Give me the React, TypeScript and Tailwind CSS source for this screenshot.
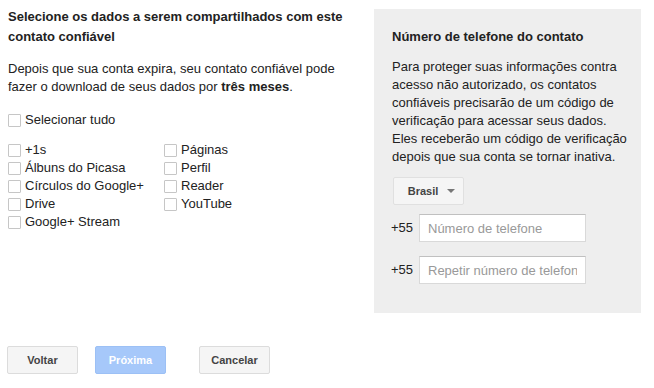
import React from 'react';

const leftItems = ['+1s', 'Álbuns do Picasa', 'Círculos do Google+', 'Drive', 'Google+ Stream'];
const rightItems = ['Páginas', 'Perfil', 'Reader', 'YouTube'];

const Check: React.FC<{ label: string }> = ({ label }) => (
    <label className="flex items-center h-[18px] cursor-pointer">
        <span className="w-[13px] h-[13px] border border-[#c6c6c6] bg-white rounded-[1px] shrink-0" />
        <span className="ml-[4px]">{label}</span>
    </label>
);

const PhoneRow: React.FC<{ placeholder: string }> = ({ placeholder }) => (
    <div className="flex items-center">
        <span className="w-[28px] -ml-[1px] text-[#222]">+55</span>
        <input
            type="text"
            placeholder={placeholder}
            className="w-[167px] h-[28px] px-[8px] bg-white border border-[#d9d9d9] border-t-[#c0c0c0] text-[13px] placeholder:text-[#999] outline-none"
        />
    </div>
);

export default function App() {
    return (
        <div className="w-[654px] h-[388px] bg-white text-[13px] text-[#222] font-['Liberation_Sans',Arial,sans-serif] overflow-hidden">
            <div className="flex">
                {/* Left column */}
                <div className="w-[366px] pl-[8px] pt-[7px]">
                    <h2 className="font-bold leading-[20px] w-[340px]">
                        Selecione os dados a serem compartilhados com este contato confiável
                    </h2>
                    <p className="mt-[13px] leading-[18px] w-[345px]">
                        Depois que sua conta expira, seu contato confiável pode fazer o download de seus dados por{' '}
                        <b>três meses</b>.
                    </p>
                    <div className="mt-[15px]">
                        <Check label="Selecionar tudo" />
                    </div>
                    <div className="mt-[12px] flex">
                        <div className="w-[156px]">
                            {leftItems.map((l) => (
                                <Check key={l} label={l} />
                            ))}
                        </div>
                        <div>
                            {rightItems.map((l) => (
                                <Check key={l} label={l} />
                            ))}
                        </div>
                    </div>
                </div>

                {/* Right panel */}
                <div className="mt-[9px] ml-[8px] w-[267px] h-[304px] bg-[#eeeeee] pl-[18px] pt-[18px]">
                    <h3 className="font-bold leading-[20px]">Número de telefone do contato</h3>
                    <p className="mt-[11px] leading-[18px] w-[240px]">
                        Para proteger suas informações contra acesso não autorizado, os contatos confiáveis precisarão
                        de um código de verificação para acessar seus dados. Eles receberão um código de verificação
                        depois que sua conta se tornar inativa.
                    </p>
                    <button className="mt-[11px] ml-[1px] w-[71px] h-[28px] flex items-center justify-center gap-[9px] bg-[#f5f5f5] border border-[#e0e0e0] rounded-[2px] text-[11px] font-bold text-[#444]">
                        <span className="ml-[6px]">Brasil</span>
                        <span className="w-0 h-0 border-l-[4px] border-r-[4px] border-t-[4px] border-l-transparent border-r-transparent border-t-[#777]" />
                    </button>
                    <div className="mt-[9px]">
                        <PhoneRow placeholder="Número de telefone" />
                    </div>
                    <div className="mt-[14px]">
                        <PhoneRow placeholder="Repetir número de telefone" />
                    </div>
                </div>
            </div>

            {/* Buttons */}
            <div className="flex mt-[33px] pl-[7px]">
                <button className="w-[71px] h-[28px] bg-[#f5f5f5] border border-[#dcdcdc] rounded-[2px] text-[11px] font-bold text-[#444]">
                    Voltar
                </button>
                <button className="ml-[17px] w-[71px] h-[28px] bg-[#a6c8fa] border border-[#9cc0f5] rounded-[2px] text-[11px] font-bold text-white">
                    Próxima
                </button>
                <button className="ml-[33px] w-[71px] h-[28px] bg-[#f5f5f5] border border-[#dcdcdc] rounded-[2px] text-[11px] font-bold text-[#444]">
                    Cancelar
                </button>
            </div>
        </div>
    );
}
